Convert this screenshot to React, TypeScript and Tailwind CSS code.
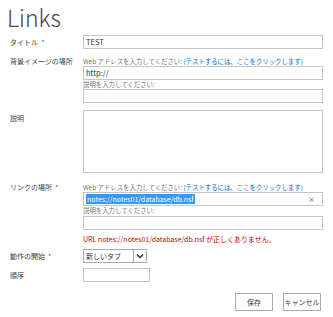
import React from 'react';

const font = { fontFamily: '"Noto Sans CJK JP", "Noto Sans", sans-serif' };

const Hint: React.FC = () => (
    <div className="h-[9px] leading-[9px] text-[6.4px] text-[#777]">
        Web アドレスを入力してください: <span className="text-[#0072c6]">(テストするには、ここをクリックします)</span>
    </div>
);

const Box: React.FC<{ children?: React.ReactNode; className?: string }> = ({ children, className }) => (
    <div className={`h-[14px] w-[240px] border border-[#c6c6c6] bg-white flex items-center px-[2px] text-[7.5px] text-[#333] ${className ?? ''}`}>
        {children}
    </div>
);

const Label: React.FC<{ text: string; req?: boolean; className?: string }> = ({ text, req, className }) => (
    <div className={`w-[73px] shrink-0 text-[7px] text-[#444] ${className ?? ''}`}>
        {text}
        {req && <span className="text-[#0072c6] ml-[3px]">*</span>}
    </div>
);

export default function App() {
    return (
        <div className="w-[333px] h-[317px] bg-white pl-[10px] overflow-hidden" style={font}>
            <div className="h-[35px] pt-[3px] -ml-[3px] text-[23px] font-light leading-[28px] text-[#444]">
                Links
            </div>

            <div className="flex items-center h-[14px]">
                <Label text="タイトル" req />
                <Box>TEST</Box>
            </div>

            <div className="flex mt-[8px]">
                <Label text="背景イメージの場所" className="leading-[9px]" />
                <div>
                    <Hint />
                    <Box>http://</Box>
                    <div className="h-[9px] leading-[9px] text-[6.4px] text-[#777]">説明を入力してください:</div>
                    <Box />
                </div>
            </div>

            <div className="flex mt-[7px]">
                <Label text="説明" className="pt-[3px]" />
                <div className="h-[63px] w-[240px] border border-[#c6c6c6]" />
            </div>

            <div className="flex mt-[10px]">
                <Label text="リンクの場所" req className="leading-[9px]" />
                <div>
                    <Hint />
                    <Box className="border-[#92c0e0] justify-between">
                        <span className="bg-[#3399ff] text-white leading-[10px] px-[1px] text-[7px]">notes://notes01/database/db.nsf</span>
                        <span className="text-[7px] text-[#444] pr-[5px]">×</span>
                    </Box>
                    <div className="h-[10px] leading-[10px] text-[6.4px] text-[#777]">説明を入力してください:</div>
                    <Box />
                    <div className="h-[18px] leading-[18px] text-[7px] text-[#bf0000]">
                        URL notes://notes01/database/db.nsf が正しくありません。
                    </div>
                </div>
            </div>

            <div className="flex items-center mt-[1px]">
                <Label text="動作の開始" req />
                <div className="h-[14px] w-[64px] border border-[#ababab] flex text-[7px] text-[#333]">
                    <div className="flex-1 flex items-center pl-[2px]">新しいタブ</div>
                    <div className="w-[13px] border-l border-[#ababab] flex items-center justify-center">
                        <svg width="8" height="6" viewBox="0 0 8 6">
                            <path d="M1 1.5 L4 4.5 L7 1.5" stroke="#333" strokeWidth="1.4" fill="none" />
                        </svg>
                    </div>
                </div>
            </div>

            <div className="flex items-center mt-[5px]">
                <Label text="順序" />
                <div className="h-[14px] w-[67px] border border-[#c6c6c6]" />
            </div>

            <div className="flex justify-end gap-[10px] pr-[12px] mt-[11px]">
                <button className="h-[18px] w-[38px] border border-[#ababab] bg-[#fdfdfd] text-[7px] text-[#444]">保存</button>
                <button className="h-[18px] w-[38px] border border-[#ababab] bg-[#fdfdfd] text-[7px] text-[#444]">キャンセル</button>
            </div>
        </div>
    );
}
